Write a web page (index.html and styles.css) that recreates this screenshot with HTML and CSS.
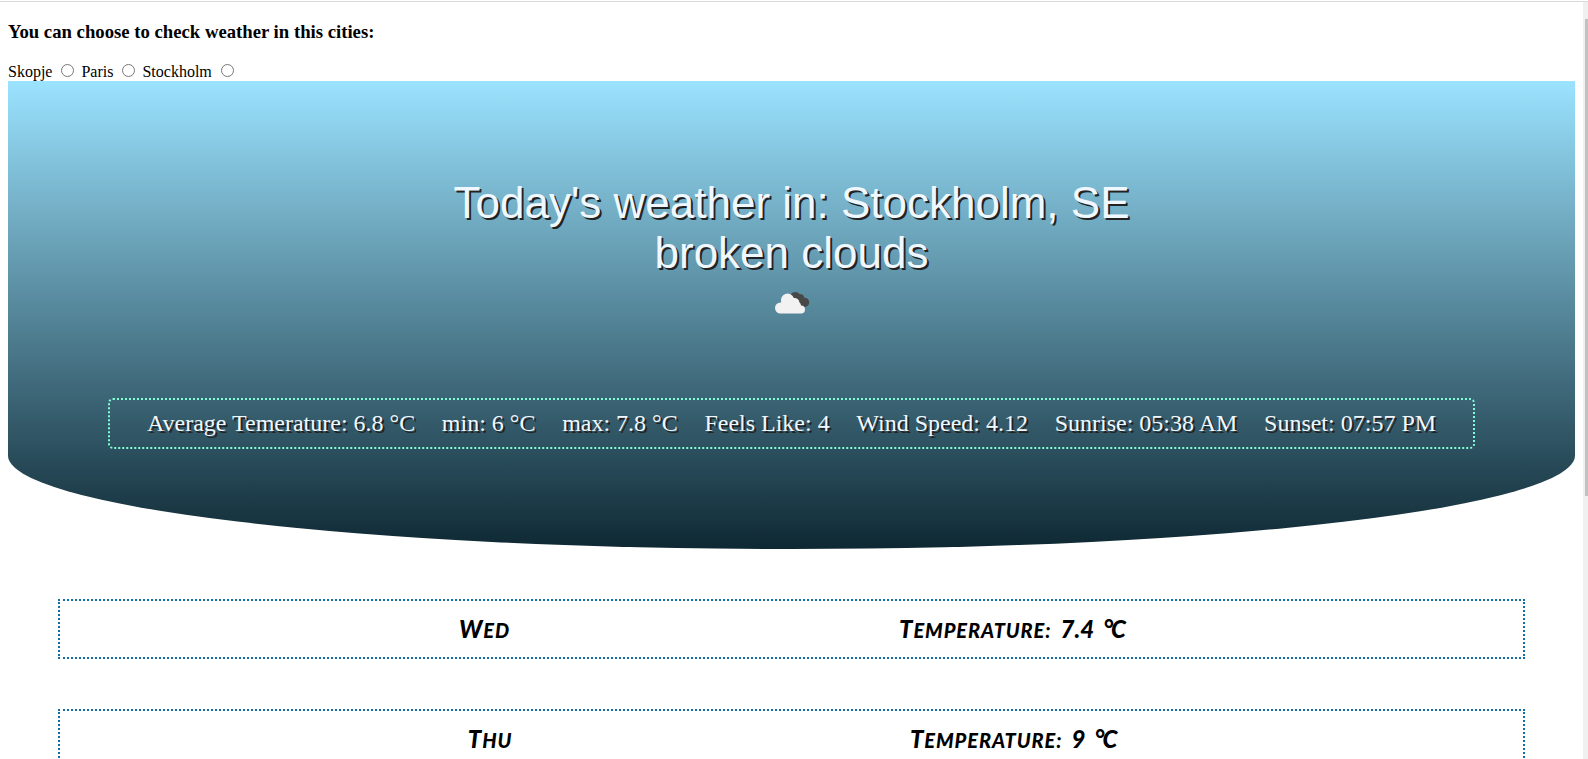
FILE: index.html
```html
<!DOCTYPE html>
<html lang="en">
<head>
<meta charset="utf-8">
<title>Weather</title>
<link rel="stylesheet" href="styles.css">
</head>
<body>
<div class="page">
  <main class="content">
    <h3 class="heading">You can choose to check weather in this cities:</h3>
    <form class="cities">
      <label for="skopje">Skopje</label>
      <input type="radio" id="skopje" name="city">
      <label for="paris">Paris</label>
      <input type="radio" id="paris" name="city">
      <label for="stockholm">Stockholm</label>
      <input type="radio" id="stockholm" name="city">
    </form>
    <section class="hero">
      <div class="today">
        <div class="title">Today's weather in: Stockholm, SE</div>
        <div class="title sky">broken clouds</div>
        <svg class="cloud" width="36" height="24" viewBox="0 0 36 24">
          <path fill="#484848" d="M15 5.500a5.500 5.500 0 0 1 9.500-2.500 4 4 0 0 1 4.700 3.700 4.500 4.500 0 1 1 .8 9.300H24z"/>
          <path fill="#f2f2f2" d="M5.500 22.500a5.500 5.500 0 0 1 0-11h.8a6.600 6.600 0 0 1 12.500-4.500 5 5 0 0 1 5.700 4.500 4 4 0 0 1 1.500 3 4 4 0 0 1 0 8z"/>
        </svg>
      </div>
      <div class="stats">
        <span>Average Temerature: 6.8 °C</span>
        <span>min: 6 °C</span>
        <span>max: 7.8 °C</span>
        <span>Feels Like: 4</span>
        <span>Wind Speed: 4.12</span>
        <span>Sunrise: 05:38 AM</span>
        <span>Sunset: 07:57 PM</span>
      </div>
    </section>
    <section class="forecast">
      <article class="day">
        <span class="label">Wed</span>
        <span class="temp"><span class="label">Temperature:</span> 7.4 <span class="unit">°C</span></span>
      </article>
      <article class="day">
        <span class="label">Thu</span>
        <span class="temp"><span class="label">Temperature:</span> 9 <span class="unit">°C</span></span>
      </article>
    </section>
  </main>
  <div class="scrollbar"><div class="thumb"></div></div>
</div>
</body>
</html>
```
FILE: styles.css
```css
* { box-sizing: border-box; }
body { margin: 0; background: #fff; color: #000; font: 16px "Liberation Serif", serif; }
.page { display: flex; width: 1588px; height: 759px; padding-top: 1px; overflow: hidden; }
.page::before { content: ""; width: 1588px; height: 1px; margin-right: -1588px; background: #d9dadb; }
.content { width: 1583px; padding: 0 8px; }
.heading { margin: 20px 0 0; font-size: 18.72px; line-height: 22px; }
.cities { height: 20px; margin-top: 18px; line-height: 19px; white-space: nowrap; }
.hero { height: 468px; padding-top: 97px; background: linear-gradient(#9be3ff, #0e2833); border-radius: 0 0 50% 50% / 0 0 20% 20%; }
.today { display: flex; flex-direction: column; align-items: center; height: 220px; }
.title { color: #f0f8ff; font: 44px/50px "Liberation Sans", Arial, sans-serif; text-shadow: 2px 2px #222; white-space: nowrap; }
.cloud { margin: 13px 0 0 3px; }
.stats { display: flex; justify-content: center; gap: 26.67px; height: 51px; margin: 0 100px; border: 2px dotted #7fffd4; border-radius: 5px; color: #f0f8ff; font-size: 24px; line-height: 47px; text-shadow: 2px 2px #222; white-space: nowrap; }
.forecast { padding: 50px; }
.day { display: flex; justify-content: space-evenly; align-items: center; height: 60px; margin-bottom: 50px; padding: 0 10px; border: 2px dotted #116fa1; font: italic 900 24px/56px Lato, sans-serif; white-space: nowrap; }
.label { display: inline-block; font-size: 20px; letter-spacing: 0.9px; text-transform: uppercase; }
.label::first-letter { font-size: 24px; }
.temp { word-spacing: 4px; }
.unit { display: inline-block; letter-spacing: -2px; }
.scrollbar { width: 5px; margin-top: 1px; padding: 17px 0 0 2px; background: #f0f0f0; }
.thumb { height: 477px; background: #c1c1c1; }
```
